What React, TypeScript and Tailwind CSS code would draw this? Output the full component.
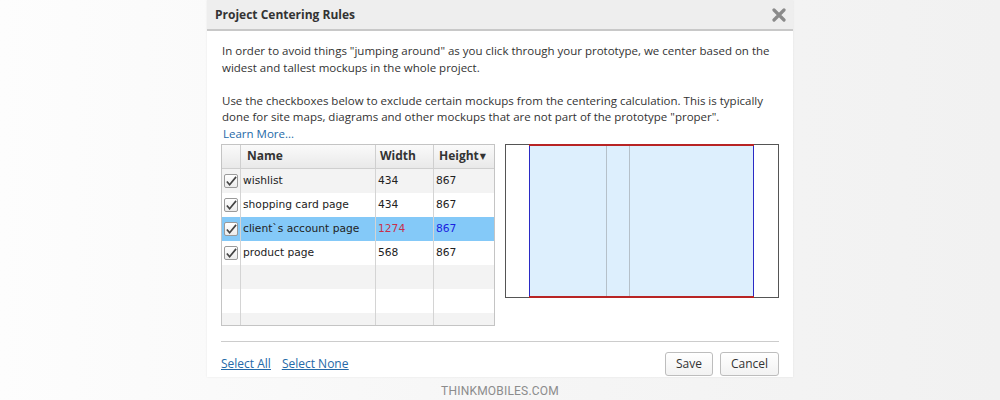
import React from 'react';

interface Row {
    name: string;
    width: string;
    height: string;
}

const rows: Row[] = [
    { name: 'wishlist', width: '434', height: '867' },
    { name: 'shopping card page', width: '434', height: '867' },
    { name: 'client`s account page', width: '1274', height: '867' },
    { name: 'product page', width: '568', height: '867' },
];

const uiFont = { fontFamily: '"Open Sans", "DejaVu Sans", sans-serif' };
const cellFont = { fontFamily: '"DejaVu Sans", Verdana, sans-serif' };

function CheckBox() {
    return (
        <div className="w-[14px] h-[14px] border border-[#9a9a9a] rounded-[2px] bg-gradient-to-b from-white to-[#ececec] flex items-center justify-center">
            <svg width="13" height="13" viewBox="0 0 13 13">
                <path d="M2 6.5 L5 10 L12 1.5" fill="none" stroke="#444" strokeWidth="1.8" />
            </svg>
        </div>
    );
}

function MockupTable() {
    const empty = [0, 1, 2];
    return (
        <div className="w-[274px] h-[182px] shrink-0 border border-[#c4c4c4] overflow-hidden bg-white">
            {/* header */}
            <div className="grid grid-cols-[19px_135px_58px_60px] h-[24px] bg-gradient-to-b from-[#fafafa] to-[#e9e9e9] border-b border-[#cfcfcf] text-[12px] font-bold text-[#333]" style={uiFont}>
                <div className="border-r border-[#cfcfcf]" />
                <div className="border-r border-[#cfcfcf] pl-[6px] flex items-center">Name</div>
                <div className="border-r border-[#cfcfcf] pl-[4px] flex items-center">Width</div>
                <div className="pl-[5px] flex items-center">
                    Height<span className="text-[8px] ml-[1px]">▼</span>
                </div>
            </div>
            {rows.map((r, i) => {
                const selected = i === 2;
                const bg = selected ? 'bg-[#84c9f8]' : i % 2 === 0 ? 'bg-[#f3f3f3]' : 'bg-white';
                return (
                    <div key={r.name} className={`grid grid-cols-[19px_135px_58px_60px] h-[24px] text-[10.7px] text-[#222] ${bg}`} style={cellFont}>
                        <div className="border-r border-[#d4d4d4] flex items-center justify-center"><CheckBox /></div>
                        <div className="border-r border-[#d4d4d4] pl-[2px] flex items-center whitespace-nowrap">{r.name}</div>
                        <div className={`border-r border-[#d4d4d4] pl-[2px] flex items-center ${selected ? 'text-[#c8304c]' : ''}`}>{r.width}</div>
                        <div className={`pl-[2px] flex items-center ${selected ? 'text-[#1a22e0]' : ''}`}>{r.height}</div>
                    </div>
                );
            })}
            {empty.map(i => (
                <div key={i} className={`grid grid-cols-[19px_135px_58px_60px] h-[24px] ${i % 2 === 0 ? 'bg-[#f3f3f3]' : 'bg-white'}`}>
                    <div className="border-r border-[#d4d4d4]" />
                    <div className="border-r border-[#d4d4d4]" />
                    <div className="border-r border-[#d4d4d4]" />
                    <div />
                </div>
            ))}
        </div>
    );
}

function Preview() {
    return (
        <svg width="274" height="154" viewBox="0 0 274 154" className="block shrink-0">
            <rect x="0.5" y="0.5" width="273" height="153" fill="white" stroke="#555" />
            <rect x="24" y="1" width="224" height="152" fill="#ddeffd" />
            <line x1="101.5" y1="1" x2="101.5" y2="153" stroke="#b5c0c9" />
            <line x1="124.5" y1="1" x2="124.5" y2="153" stroke="#b5c0c9" />
            <line x1="24.5" y1="1" x2="24.5" y2="153" stroke="#2a2ac4" />
            <line x1="248.5" y1="1" x2="248.5" y2="153" stroke="#2a2ac4" />
            <line x1="24" y1="1" x2="249" y2="1" stroke="#b82424" strokeWidth="2" />
            <line x1="24" y1="153" x2="249" y2="153" stroke="#b82424" strokeWidth="2" />
        </svg>
    );
}

export default function App() {
    return (
        <div className="w-[1000px] h-[400px] bg-gradient-to-r from-[#fdfdfd] via-[#f6f6f6] to-[#f1f1f1] flex flex-col items-center">
            <div className="w-[586px] h-[377px] bg-white flex flex-col shadow-[0_0_2px_rgba(0,0,0,0.08)]" style={uiFont}>
                {/* title bar */}
                <div className="h-[31px] bg-[#eeeeee] border-b-2 border-[#c8c8c8] flex items-center justify-between pl-[8px] pr-[6px]">
                    <span className="text-[12px] font-bold text-[#333]">Project Centering Rules</span>
                    <svg width="14" height="14" viewBox="0 0 14 14" className="mr-[1px]">
                        <path d="M2 2 L12 12 M12 2 L2 12" stroke="#8a8a8a" strokeWidth="3.2" strokeLinecap="round" />
                    </svg>
                </div>

                <div className="px-[14px] pt-[12px] flex flex-col text-[11.5px] leading-[16.5px] text-[#333]">
                    <p className="pl-[1px]">In order to avoid things "jumping around" as you click through your prototype, we center based on the widest and tallest mockups in the whole project.</p>
                    <p className="pl-[1px] mt-[16.5px]">Use the checkboxes below to exclude certain mockups from the centering calculation. This is typically done for site maps, diagrams and other mockups that are not part of the prototype "proper".</p>
                    <a className="pl-[2px] text-[#2569a8]">Learn More...</a>

                    <div className="mt-[2px] flex gap-[10px]">
                        <MockupTable />
                        <Preview />
                    </div>

                    <div className="mt-[15px] border-t border-[#cccccc]" />

                    <div className="mt-[10px] flex items-center justify-between">
                        <div className="flex gap-[11px] text-[12px] text-[#2569a8] underline">
                            <a>Select All</a>
                            <a>Select None</a>
                        </div>
                        <div className="flex gap-[7px]">
                            <button className="w-[48px] h-[24px] border border-[#bdbdbd] rounded-[3px] bg-gradient-to-b from-white to-[#f2f2f2] text-[12px] text-[#333]">Save</button>
                            <button className="w-[59px] h-[24px] border border-[#bdbdbd] rounded-[3px] bg-gradient-to-b from-white to-[#f2f2f2] text-[12px] text-[#333]">Cancel</button>
                        </div>
                    </div>
                </div>
            </div>
            <div className="mt-[5px] text-[12px] text-[#8c8c8c] tracking-[0.2px]" style={{ fontFamily: 'Roboto, sans-serif' }}>THINKMOBILES.COM</div>
        </div>
    );
}
